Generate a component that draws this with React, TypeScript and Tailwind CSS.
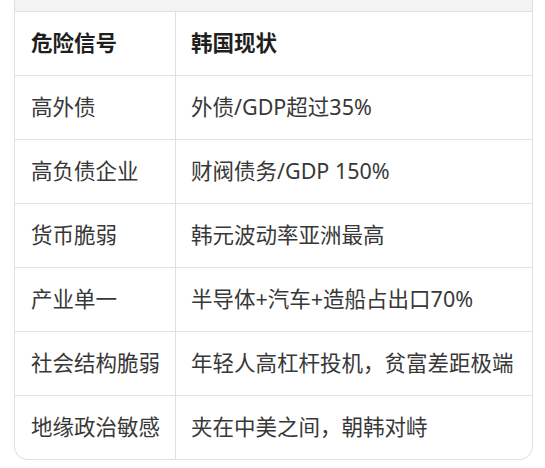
const rows = [
  ['高外债', '外债/GDP超过35%'],
  ['高负债企业', '财阀债务/GDP 150%'],
  ['货币脆弱', '韩元波动率亚洲最高'],
  ['产业单一', '半导体+汽车+造船占出口70%'],
  ['社会结构脆弱', '年轻人高杠杆投机，贫富差距极端'],
  ['地缘政治敏感', '夹在中美之间，朝韩对峙'],
]

export default function App() {
  return (
    <div
      className="w-[545px] h-[468px] bg-white pl-[14px] pr-[12px]"
      style={{ fontFamily: '"Noto Sans", "Noto Sans CJK SC", sans-serif' }}
    >
      <div className="border-x border-b border-[#e0e0e0] rounded-b-[14px] overflow-hidden">
        {/* Top strip */}
        <div className="h-[12px] bg-[#f3f3f3] border-b border-[#e0e0e0]" />

        {/* Header */}
        <div className="grid grid-cols-[161px_1fr] h-[64px] border-b border-[#e0e0e0] text-[21.5px] font-bold text-[#1f1f1f]">
          <div className="flex items-center pl-[16px] border-r border-[#e0e0e0]">危险信号</div>
          <div className="flex items-center pl-[15px]">韩国现状</div>
        </div>

        {/* Body */}
        {rows.map(([a, b], i) => (
          <div
            key={a}
            className={`grid grid-cols-[161px_1fr] text-[21.5px] text-[#383838] ${
              i < rows.length - 1 ? 'h-[64px] border-b border-[#e0e0e0]' : 'h-[63px]'
            }`}
          >
            <div className="flex items-center pl-[16px] border-r border-[#e0e0e0]">{a}</div>
            <div className="flex items-center pl-[15px] whitespace-nowrap">{b}</div>
          </div>
        ))}
      </div>
    </div>
  )
}
